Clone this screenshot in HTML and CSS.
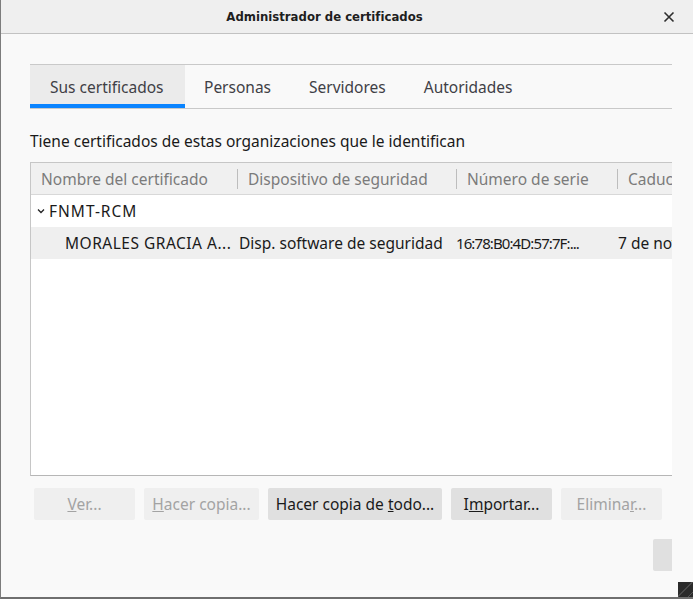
FILE: index.html
```html
<!DOCTYPE html>
<html lang="es">
<head>
<meta charset="utf-8">
<title>Administrador de certificados</title>
<link rel="stylesheet" href="styles.css">
</head>
<body>
<div class="window">
  <header class="titlebar">
    <span class="title">Administrador de certificados</span>
    <button class="close" aria-label="Cerrar">
      <svg width="12" height="12" viewBox="0 0 12 12"><path d="M1.5 1.5 L10.5 10.5 M10.5 1.5 L1.5 10.5" stroke="#2e2e2e" stroke-width="1.6" fill="none"/></svg>
    </button>
  </header>
  <main class="content">
    <nav class="tabs">
      <div class="tab active">Sus certificados</div>
      <div class="tab">Personas</div>
      <div class="tab">Servidores</div>
      <div class="tab">Autoridades</div>
    </nav>
    <p class="desc">Tiene certificados de estas organizaciones que le identifican</p>
    <div class="tree">
      <div class="tree-head">
        <div class="col c1">Nombre del certificado</div>
        <div class="col c2">Dispositivo de seguridad</div>
        <div class="col c3">Número de serie</div>
        <div class="col c4">Caducidad</div>
      </div>
      <div class="row group">
        <span class="twisty"><svg width="8" height="6" viewBox="0 0 8 6"><path d="M1 1.5 L4 4.5 L7 1.5" stroke="#222" stroke-width="1.3" fill="none"/></svg></span>
        <span class="caps-wide">FNMT-RCM</span>
      </div>
      <div class="row item">
        <div class="cell c1 indent"><span class="caps">MORALES GRACIA A...</span></div>
        <div class="cell c2">Disp. software de seguridad</div>
        <div class="cell c3"><span class="serial">16:78:B0:4D:57:7F:...</span></div>
        <div class="cell c4">7 de noviembre de 2023</div>
      </div>
    </div>
    <div class="buttons">
      <button class="btn w1" disabled><u>V</u>er...</button>
      <button class="btn w2" disabled><u>H</u>acer copia...</button>
      <button class="btn w3">Hacer copia de <u>t</u>odo...</button>
      <button class="btn w1">I<u>m</u>portar...</button>
      <button class="btn w1" disabled>Elimina<u>r</u>...</button>
    </div>
    <div class="footer">
      <div class="okbtn"></div>
    </div>
  </main>
  <div class="grip"></div>
</div>
</body>
</html>
```

FILE: styles.css
```css
html, body {
  margin: 0;
  padding: 0;
  background: #f9f9f9;
}
body {
  width: 693px;
  height: 599px;
  overflow: hidden;
  font-family: "Noto Sans", "DejaVu Sans", sans-serif;
  color: #1a1a1a;
}
.window {
  position: relative;
  width: 692px;
  height: 597px;
  border-left: 1px solid #7c7c7c;
  border-bottom: 2px solid #6f6f6f;
  background: #f9f9f9;
  display: flex;
  flex-direction: column;
}
.titlebar {
  height: 33px;
  flex: none;
  background: #efefef;
  border-bottom: 1px solid #c2c2c2;
  display: flex;
  align-items: center;
  justify-content: center;
  position: relative;
}
.title {
  font-family: "DejaVu Sans Condensed", "DejaVu Sans", sans-serif;
  font-weight: bold;
  font-size: 13px;
  color: #1e1e1e;
  margin-left: -45px;
}
.close {
  position: absolute;
  right: 18px;
  top: 11px;
  width: 12px;
  height: 12px;
  padding: 0;
  border: 0;
  background: none;
  display: flex;
}
.content {
  flex: 1;
  padding: 30px 21px 0 29px;
  display: flex;
  flex-direction: column;
  font-size: 15.5px;
}
.tabs {
  display: flex;
  border-top: 1px solid #c9c9c9;
  border-bottom: 1px solid #c9c9c9;
  height: 43px;
}
.tab {
  padding: 0 19px;
  display: flex;
  align-items: center;
  color: #3f4046;
  box-sizing: border-box;
  height: 43px;
}
.tab.active {
  background: #ebebeb;
  border-bottom: 4px solid #0a84ff;
  padding: 4px 0 0 20px;
  width: 155px;
}
.desc {
  margin: 21px 0 0 0;
  line-height: 22px;
  color: #1a1a1a;
}
.tree {
  margin-top: 10px;
  height: 314px;
  box-sizing: border-box;
  background: #fff;
  border-top: 1px solid #c6c6c6;
  border-left: 1px solid #c6c6c6;
  border-bottom: 1px solid #b6b6b6;
  overflow: hidden;
}
.tree-head {
  display: flex;
  height: 31px;
  background: #f0f0f0;
  border-bottom: 1px solid #d8d8d8;
  color: #7b7b7b;
  align-items: center;
}
.col {
  flex: none;
  box-sizing: border-box;
  padding-left: 10px;
  white-space: nowrap;
  overflow: hidden;
  height: 20px;
  line-height: 20px;
}
.col + .col {
  border-left: 1px solid #bdbdbd;
}
.c1 { width: 206px; }
.c2 { width: 219px; }
.c3 { width: 161px; }
.c4 { width: 60px; }
.row {
  display: flex;
  align-items: center;
  height: 32px;
  white-space: nowrap;
}
.group {
  padding-left: 6px;
}
.twisty {
  width: 12px;
  display: flex;
  align-items: center;
}
.caps-wide {
  letter-spacing: 1px;
}
.caps {
  letter-spacing: 0.5px;
}
.serial {
  font-size: 15px;
  letter-spacing: -0.9px;
}
.item {
  background: #efefef;
}
.cell {
  flex: none;
  box-sizing: border-box;
  overflow: hidden;
  padding-left: 2px;
}
.cell.c1 { padding-left: 34px; }
.cell.c3 { padding-left: 0; }
.cell.c4 { width: 60px; padding-left: 1px; }
.buttons {
  display: flex;
  gap: 9px;
  margin: 12px 0 0 4px;
}
.btn {
  height: 32px;
  font-family: inherit;
  font-size: 15.5px;
  border: 0;
  border-radius: 2px;
  background: #e0e0e0;
  color: #1a1a1a;
  padding: 0;
}
.btn:disabled {
  background: #efefef;
  color: #a3a3a3;
}
.w1 { width: 101px; }
.w2 { width: 115px; }
.w3 { width: 174px; }
.footer {
  display: flex;
  justify-content: flex-end;
  margin-top: 19px;
}
.okbtn {
  width: 19px;
  height: 32px;
  background: #e0e0e0;
  border-radius: 2px 0 0 2px;
}
.grip {
  position: absolute;
  right: 0;
  bottom: 0;
  width: 15px;
  height: 15px;
  background: linear-gradient(135deg, #2b2b2b 0 45%, #4a4a4a 45% 50%, #2b2b2b 50% 80%, #555 80% 84%, #2b2b2b 84%);
}
```
